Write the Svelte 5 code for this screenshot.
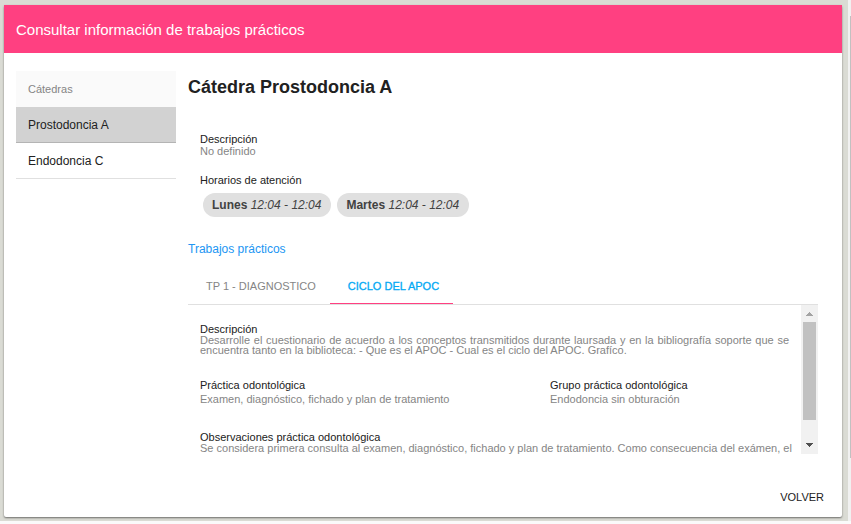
<script>
  const catedras = ['Prostodoncia A', 'Endodoncia C'];
  let selected = $state(0);
  const horarios = [
    { dia: 'Lunes', horas: '12:04 - 12:04' },
    { dia: 'Martes', horas: '12:04 - 12:04' }
  ];
  const trabajos = ['TP 1 - DIAGNOSTICO', 'CICLO DEL APOC'];
  let tab = $state(1);
</script>

<div class="page">
  <main class="backdrop">
    <article class="card">
      <header><h1>Consultar información de trabajos prácticos</h1></header>
      <div class="body">
        <nav aria-label="Cátedras">
          <div class="subheader">Cátedras</div>
          {#each catedras as nombre, i}
            <button class="item" class:selected={selected === i} onclick={() => (selected = i)}>{nombre}</button>
          {/each}
        </nav>
        <section class="detail">
          <h2>Cátedra Prostodoncia A</h2>
          <div class="info">
            <h4>Descripción</h4>
            <p>No definido</p>
            <h4 class="hours">Horarios de atención</h4>
            <div class="chips">
              {#each horarios as h}
                <span class="chip"><b>{h.dia}</b> <i>{h.horas}</i></span>
              {/each}
            </div>
          </div>
          <h3>Trabajos prácticos</h3>
          <div class="tabs" role="tablist">
            {#each trabajos as t, i}
              <button role="tab" class="tab" class:active={tab === i} aria-selected={tab === i} onclick={() => (tab = i)}>{t}</button>
            {/each}
          </div>
          <div class="pane">
            <div class="content">
              <div class="block">
                <h4>Descripción</h4>
                <p class="long">Desarrolle el cuestionario de acuerdo a los conceptos transmitidos durante laursada y en la bibliografía soporte que se encuentra tanto en la biblioteca: - Que es el APOC - Cual es el ciclo del APOC. Grafíco.</p>
              </div>
              <div class="cols">
                <div>
                  <h4>Práctica odontológica</h4>
                  <p>Examen, diagnóstico, fichado y plan de tratamiento</p>
                </div>
                <div>
                  <h4>Grupo práctica odontológica</h4>
                  <p>Endodoncia sin obturación</p>
                </div>
              </div>
              <div class="block">
                <h4>Observaciones práctica odontológica</h4>
                <p class="long last">Se considera primera consulta al examen, diagnóstico, fichado y plan de tratamiento. Como consecuencia del exámen, el</p>
              </div>
            </div>
            <div class="scroll" aria-hidden="true">
              <svg width="17" height="17" viewBox="0 0 17 17" shape-rendering="crispEdges"><path fill="#a3a3a3" d="M8 7h1v1h1v1h1v1h1v1H5v-1h1V9h1V8h1z" /></svg>
              <div class="thumb"></div>
              <svg width="17" height="17" viewBox="0 0 17 17" shape-rendering="crispEdges"><path fill="#505050" d="M5 6h7v1h-1v1h-1v1H9v1H8V9H7V8H6V7H5z" /></svg>
            </div>
          </div>
        </section>
      </div>
      <footer><button class="back">VOLVER</button></footer>
    </article>
  </main>
  <div class="rail" aria-hidden="true"><div class="rail-thumb"></div></div>
</div>

<style>
  :global(body) { background: #fafafa; }
  .page {
    display: flex;
    font-family: 'Liberation Sans', Arial, sans-serif;
    color: #212121;
  }
  h1, h2, h3, h4, p { margin: 0; font-weight: 400; }
  button { font-family: inherit; border: 0; background: none; color: inherit; cursor: pointer; }
  .backdrop { flex: 1; min-width: 0; background: #dadbd4; padding: 5px 6px 4px 4px; }
  .card {
    background: #fff;
    border-radius: 2px;
    box-shadow: 0 1px 2px rgba(0, 0, 0, 0.5);
  }
  header { background: #ff4081; color: #fff; padding: 0 12px; }
  h1 { font-size: 15px; line-height: 50px; height: 48px; }
  .body { display: flex; gap: 12px; padding: 18px 24px 0 12px; }
  nav { width: 160px; flex: none; }
  .subheader { background: #fafafa; color: #858585; font-size: 11px; line-height: 36px; padding: 0 12px; }
  .item {
    display: block;
    width: 100%;
    height: 36px;
    padding: 0 12px;
    font-size: 12px;
    text-align: left;
    border-bottom: 1px solid #e0e0e0;
  }
  .item.selected { background: #d2d2d2; border-color: #b4b4b4; }
  .detail { flex: 1; min-width: 0; }
  h2 { font-size: 18px; font-weight: 700; line-height: 32px; }
  .info { padding: 30px 12px 0; }
  h4 { font-size: 11px; line-height: 12px; }
  p { font-size: 11px; line-height: 12px; color: #858585; }
  .hours { margin-top: 17px; }
  .chips { display: flex; gap: 6px; padding: 7px 3px 0; }
  .chip {
    background: #e0e0e0;
    color: #424242;
    border-radius: 12px;
    padding: 0 10px 0 9px;
    font-size: 12px;
    line-height: 24px;
    white-space: nowrap;
  }
  h3 { font-size: 12px; line-height: 16px; margin-top: 24px; color: #2196f3; }
  .tabs { display: flex; margin-top: 11px; border-bottom: 1px solid #e0e0e0; }
  .tab {
    height: 36px;
    padding: 0 14px 0 18px;
    font-size: 11px;
    color: #858585;
    border-bottom: 1px solid transparent;
  }
  .tab.active { color: #03a9f4; border-color: #ff4081; -webkit-text-stroke: 0.3px #03a9f4; }
  .pane { display: flex; height: 149px; }
  .content { flex: 1; min-width: 0; overflow: hidden; padding: 18px 12px 0; box-sizing: border-box; }
  .long { line-height: 10px; text-align: justify; }
  .last { text-align-last: justify; white-space: nowrap; }
  .cols { display: flex; margin: 24px 0 26px; }
  .cols > div { flex: 1; }
  .cols > div:first-child { flex: none; width: 350px; }
  .cols p { margin-top: 2px; }
  .scroll { width: 17px; background: #f1f1f1; display: flex; flex-direction: column; }
  .thumb { height: 98px; margin: 0 2px auto; background: #c1c1c1; }
  footer { display: flex; justify-content: flex-end; padding: 25px 12px 2px; }
  .back { font-size: 11px; height: 36px; padding: 0 6px; color: #212121; }
  .rail { width: 3px; background: #f1f1f1; }
  .rail-thumb { height: 442px; margin: 16px 0 0 2px; background: #c1c1c1; }
</style>
